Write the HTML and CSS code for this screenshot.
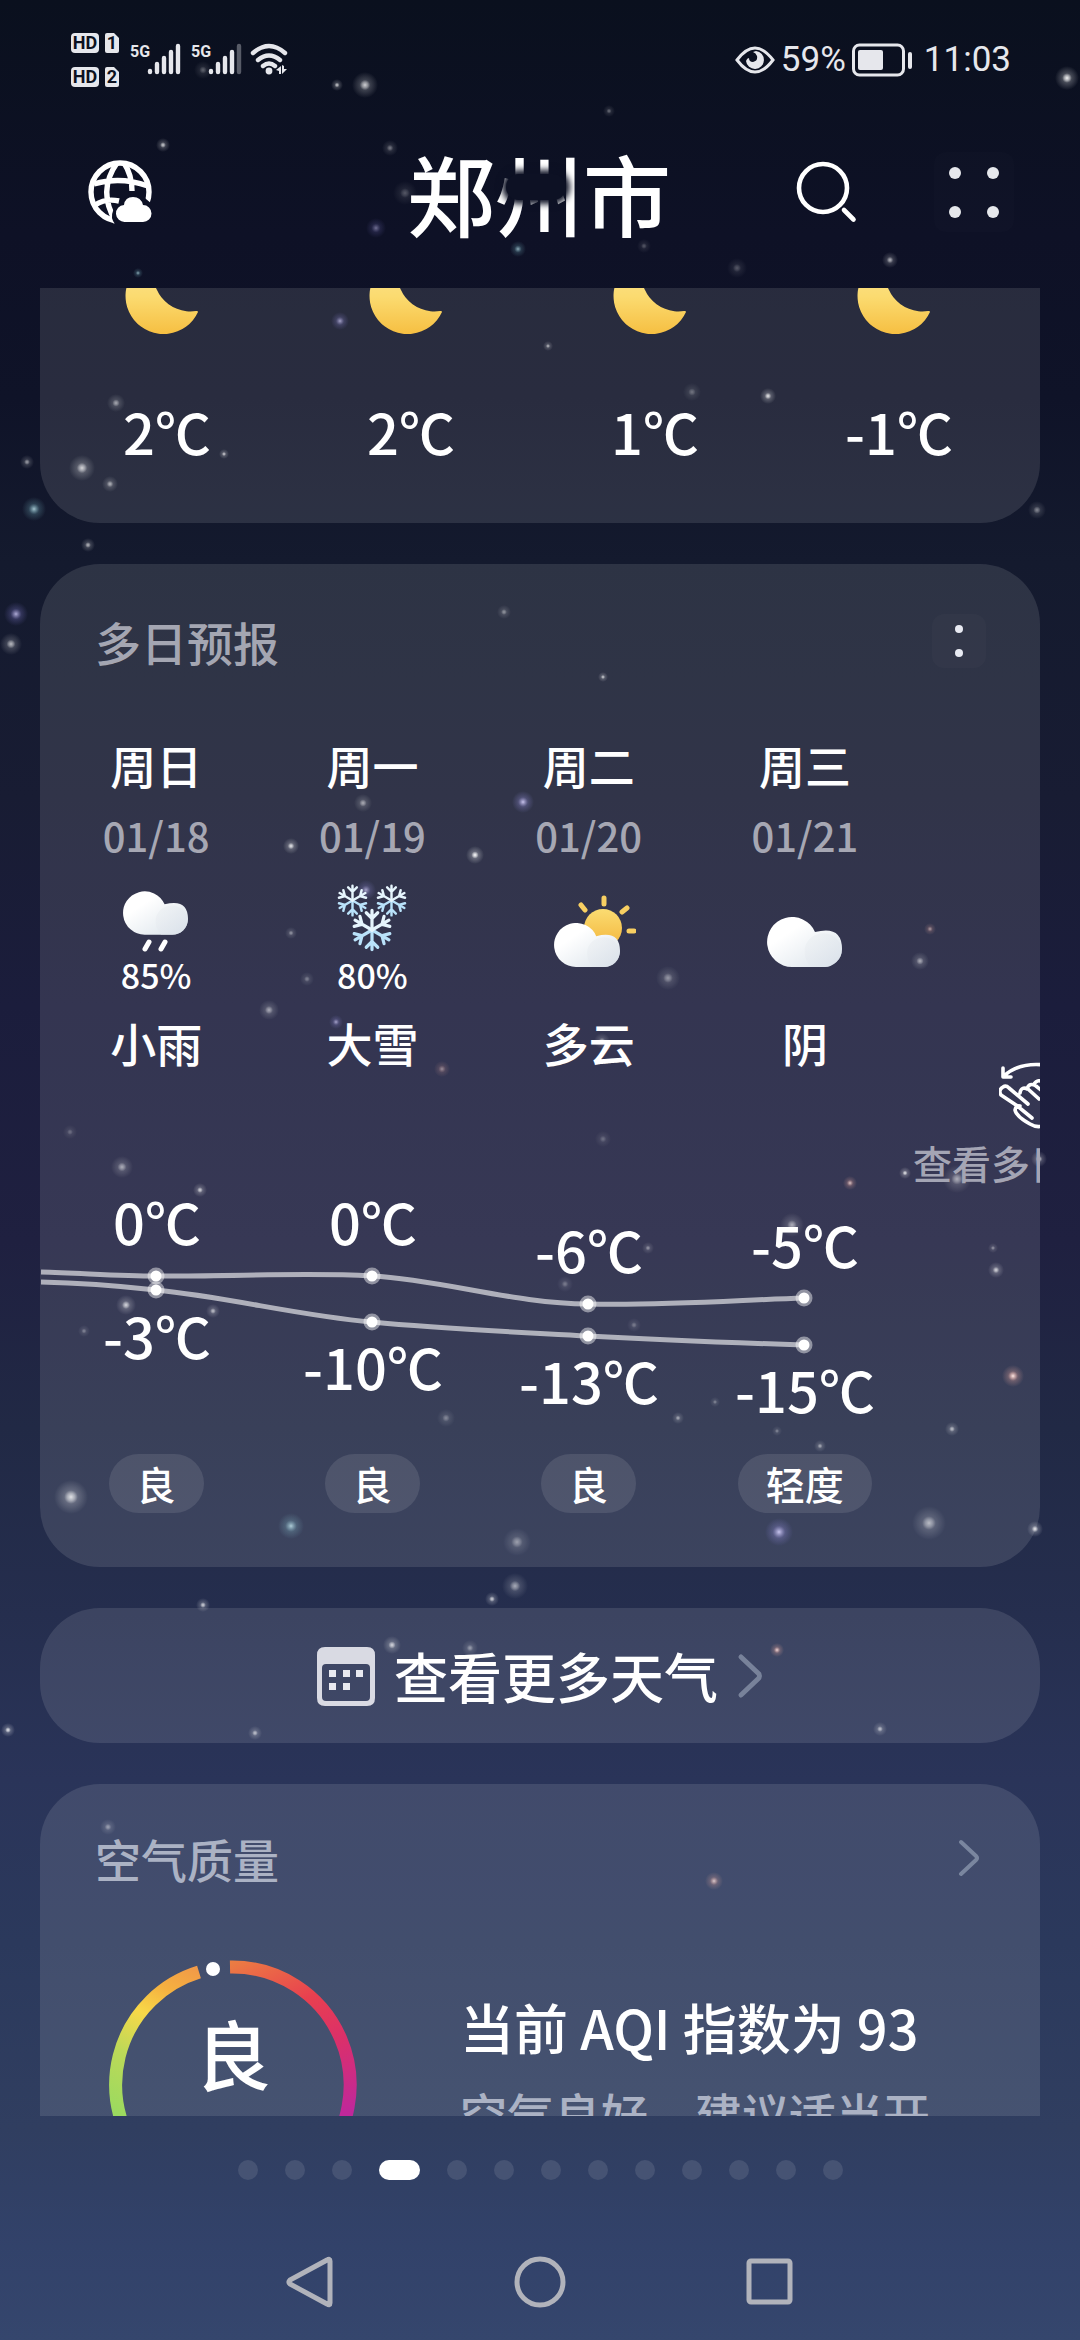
FILE: index.html
```
<!DOCTYPE html>
<html lang="zh-CN">
<head>
<meta charset="utf-8">
<meta name="viewport" content="width=device-width, initial-scale=1">
<title>郑州市</title>
<link rel="stylesheet" href="styles.css">
</head>
<body>
<svg class="sky" id="sky" viewBox="0 0 1080 2340" preserveAspectRatio="xMidYMid slice" aria-hidden="true">
  <defs>
    <radialGradient id="white"><stop offset="0" stop-color="#fff"/><stop offset=".22" stop-color="#fff" stop-opacity=".65"/><stop offset=".4" stop-color="#fff" stop-opacity=".25"/><stop offset="1" stop-color="#fff" stop-opacity="0"/></radialGradient>
    <radialGradient id="violet"><stop offset="0" stop-color="#d5d0ff"/><stop offset=".25" stop-color="#b5aef0" stop-opacity=".6"/><stop offset=".45" stop-color="#8f88e0" stop-opacity=".3"/><stop offset="1" stop-color="#8078d8" stop-opacity="0"/></radialGradient>
    <radialGradient id="teal"><stop offset="0" stop-color="#c8eef5"/><stop offset=".25" stop-color="#a0d5e0" stop-opacity=".6"/><stop offset=".45" stop-color="#80c0cc" stop-opacity=".28"/><stop offset="1" stop-color="#80c0cc" stop-opacity="0"/></radialGradient>
    <radialGradient id="pink"><stop offset="0" stop-color="#ffe8e4"/><stop offset=".25" stop-color="#f0b8b0" stop-opacity=".65"/><stop offset=".45" stop-color="#e09a90" stop-opacity=".3"/><stop offset="1" stop-color="#e09a90" stop-opacity="0"/></radialGradient>
  </defs>
</svg>

<header class="top">
  <div class="status">
    <svg class="status-net" viewBox="0 0 220 60" width="220" height="60" role="img" aria-label="HD 5G Wi-Fi">
      <g fill="#e6e7ec">
        <rect x="0" y="3" width="28" height="20" rx="4"/>
        <rect x="0" y="37" width="28" height="20" rx="4"/>
        <path d="M36 3h7l5 5v13a2 2 0 0 1-2 2h-10a2 2 0 0 1-2-2v-16a2 2 0 0 1 2-2z"/>
        <path d="M36 37h7l5 5v13a2 2 0 0 1-2 2h-10a2 2 0 0 1-2-2v-16a2 2 0 0 1 2-2z"/>
      </g>
      <g class="badge-text">
        <text x="14" y="19">HD</text><text x="14" y="53">HD</text>
        <text x="41" y="19">1</text><text x="41" y="53">2</text>
      </g>
      <g class="net-text"><text x="59" y="27">5G</text><text x="120" y="27">5G</text></g>
      <g stroke="#e6e7ec" stroke-width="4.4" stroke-linecap="round">
        <path d="M79 41v1M86 34v8M93 28v14M100 22v20M107 16v26"/>
        <path d="M140 41v1M147 34v8M154 28v14M161 22v20"/>
        <path d="M168 16v26" opacity=".35"/>
      </g>
      <g fill="none" stroke="#e6e7ec" stroke-width="4.4" stroke-linecap="round">
        <path d="M182 23q16-14 32 0M187 30q11-9 22 0M192 36q6-5 12 0"/>
      </g>
      <circle cx="198" cy="41" r="3.4" fill="#e6e7ec"/>
      <path d="M205 40l5-4v8h-2v-3zM211 35l0 9 5-5h-3v-3z" fill="#e6e7ec"/>
    </svg>
    <div class="status-right">
      <svg viewBox="0 0 40 28" width="40" height="28" aria-hidden="true">
        <path d="M2 14Q20-10 38 14Q20 38 2 14Z" fill="none" stroke="#e6e7ec" stroke-width="3"/>
        <path d="M21 5a9 9 0 1 1-10 10q1-3 3-3q0 4 4 4q5-1 4-6q-1-3-4-4z" fill="#e6e7ec"/>
      </svg>
      <span class="pct">59%</span>
      <svg viewBox="0 0 60 34" width="60" height="34" aria-hidden="true">
        <rect x="1.5" y="2" width="50" height="30" rx="6" fill="none" stroke="#e6e7ec" stroke-width="3"/>
        <rect x="6" y="7" width="25" height="20" rx="2" fill="#e6e7ec"/>
        <rect x="56" y="9" width="4" height="17" rx="2" fill="#e6e7ec"/>
      </svg>
      <time>11:03</time>
    </div>
  </div>
  <div class="bar">
    <button class="icon-btn city-list" aria-label="城市管理">
      <svg viewBox="0 0 64 64" width="64" height="64">
        <mask id="cut"><rect width="64" height="64" fill="#fff"/><path d="M27 64q-5-6-2-13q2-5 6-6l1 0q3-12 14-12q9 0 12 6l6 5v20z" fill="#000"/></mask>
        <g mask="url(#cut)" fill="none" stroke="#fff" stroke-width="5.4">
          <circle cx="32" cy="32" r="29"/>
          <path d="M29 3q-20 28-1 59M36 3q8 12 8 28M6 24q26-8 54 2M7 45q11-7 24-4"/>
        </g>
        <path d="M37 62a8.500 8.500 0 0 1-1-17q1-8 9-8t10 8a8.500 8.500 0 0 1 0 17z" fill="#fff"/>
      </svg>
    </button>
    <h1>郑州市</h1>
    <div class="tools">
      <button class="icon-btn" aria-label="搜索">
        <svg viewBox="0 0 62 62" width="62" height="62" fill="none" stroke="#fff" stroke-width="4.600" stroke-linecap="round"><circle cx="27" cy="27" r="24"/><path d="M48 49l9.500 9.500"/></svg>
      </button>
      <button class="icon-btn more" aria-label="更多">
        <svg viewBox="0 0 80 80" width="80" height="80" fill="#e6e8ec"><circle cx="21" cy="21" r="6"/><circle cx="59" cy="21" r="6"/><circle cx="21" cy="60" r="6"/><circle cx="59" cy="60" r="6"/></svg>
      </button>
    </div>
    <span class="camera"></span>
  </div>
</header>

<main>
  <svg class="defs" width="0" height="0" aria-hidden="true">
    <defs>
      <linearGradient id="moonfill" x1="0" y1="0" x2="0" y2="1"><stop offset="0" stop-color="#fbe394"/><stop offset=".5" stop-color="#fbdb70"/><stop offset="1" stop-color="#f6bf42"/></linearGradient>
      <linearGradient id="cloudfill" x1="0" y1="0" x2="1" y2="1"><stop offset=".3" stop-color="#fff"/><stop offset="1" stop-color="#d8e1e9"/></linearGradient>
      <linearGradient id="puff" x1="0" y1="0" x2="1" y2="1"><stop offset="0" stop-color="#eef1f3"/><stop offset="1" stop-color="#d9e0ea"/></linearGradient>
      <linearGradient id="sun" x1="0" y1="0" x2="0" y2="1"><stop offset="0" stop-color="#fbdc72"/><stop offset="1" stop-color="#f3b63c"/></linearGradient>
      <symbol id="moon" viewBox="0 0 76 76"><path d="M30 1A38 38 0 1 0 73 54Q73 52.500 71 53A37 37 0 0 1 31 3Q31 1 30 1Z" fill="url(#moonfill)"/></symbol>
      <symbol id="cloud" viewBox="0 0 75 50">
        <path d="M25 50A25 25 0 1 1 48 15Q75 8 75 32A18 18 0 0 1 56 50Z" fill="url(#cloudfill)"/>
        <path d="M38 30A19 19 0 0 1 75 32A18 18 0 0 1 56 50H44Q36 42 38 30Z" fill="url(#puff)" opacity=".6"/>
      </symbol>
      <symbol id="flake" viewBox="-20 -20 40 40" overflow="visible">
        <g fill="none" stroke-width="2.800" stroke-linecap="round">
          <g stroke="#b9e2fa"><path d="M0 0V-17M-5-15L0-10L5-15" transform="rotate(180)"/><path d="M0 0V-17M-5-15L0-10L5-15" transform="rotate(120)"/><path d="M0 0V-17M-5-15L0-10L5-15" transform="rotate(240)"/></g>
          <g stroke="#e6f5fd"><path d="M0 0V-17M-5-15L0-10L5-15"/><path d="M0 0V-17M-5-15L0-10L5-15" transform="rotate(60)"/><path d="M0 0V-17M-5-15L0-10L5-15" transform="rotate(300)"/></g>
        </g>
      </symbol>
    </defs>
  </svg>

  <section class="card hourly">
    <div class="hour"><svg width="76" height="76"><use href="#moon"/></svg><span>2℃</span></div>
    <div class="hour"><svg width="76" height="76"><use href="#moon"/></svg><span>2℃</span></div>
    <div class="hour"><svg width="76" height="76"><use href="#moon"/></svg><span>1℃</span></div>
    <div class="hour"><svg width="76" height="76"><use href="#moon"/></svg><span>-1℃</span></div>
  </section>

  <section class="card daily">
    <div class="card-head">
      <h2>多日预报</h2>
      <button class="icon-btn menu" aria-label="菜单"><svg viewBox="0 0 54 54" width="54" height="54" fill="#e8eaf2"><circle cx="27" cy="15" r="4"/><circle cx="27" cy="39" r="4"/></svg></button>
    </div>
    <div class="days">
      <div class="day">
        <b>周日</b><span class="date">01/18</span>
        <div class="sky-icon">
          <svg width="80" height="76" viewBox="0 0 80 76"><use href="#cloud" x="7" y="12" width="65" height="44"/><path d="M33 63l-4 7M49 63l-4 7" stroke="#fff" stroke-width="5" stroke-linecap="round"/></svg>
          <small>85%</small>
        </div>
        <b>小雨</b>
      </div>
      <div class="day">
        <b>周一</b><span class="date">01/19</span>
        <div class="sky-icon">
          <svg width="80" height="76" viewBox="0 0 80 76"><use href="#flake" x="3" y="4" width="35" height="35"/><use href="#flake" x="42" y="4" width="35" height="35"/><use href="#flake" x="17" y="28" width="46" height="46"/></svg>
          <small>80%</small>
        </div>
        <b>大雪</b>
      </div>
      <div class="day">
        <b>周二</b><span class="date">01/20</span>
        <div class="sky-icon">
          <svg width="94" height="116" viewBox="-7 -2 94 116"><circle cx="54" cy="47" r="19" fill="url(#sun)"/><path d="M55 17v6M32 24l4 5M78 27l-5 4M80 50h5" stroke="#f8cf62" stroke-width="5" stroke-linecap="round" fill="none"/><use href="#cloud" x="5" y="42" width="66" height="44"/></svg>
        </div>
        <b>多云</b>
      </div>
      <div class="day">
        <b>周三</b><span class="date">01/21</span>
        <div class="sky-icon">
          <svg width="80" height="116" viewBox="0 -2 80 116"><use href="#cloud" x="2" y="36" width="75" height="50"/></svg>
        </div>
        <b>阴</b>
      </div>
      <div class="hint">
        <svg width="70" height="70" viewBox="0 0 70 70" fill="none" stroke="#fff" stroke-width="3.600" stroke-linecap="round" stroke-linejoin="round">
          <path d="M5 14Q20 0 46 3M4 6v9h8"/>
          <path d="M33 56L17 43L2 33q-3-5 2-8q3-2 6 1L29 42M21 31q1-7 8-4l11 10M28 27q2-7 9-3l10 8M35 22q4-6 10-1l12 14q6 16-6 25q-10 8-20 2Q17 54 16 48q1-5 5-4"/>
        </svg>
        <span>查看多日</span>
      </div>
    </div>
    <svg class="chart" viewBox="0 0 1000 264" role="img" aria-label="最高与最低气温">
      <g class="line">
        <path d="M1 82C40 83 80 86 116 86C190 87 260 82 332 86C404 90 476 114 548 114C620 116 700 110 764 108"/>
        <path d="M1 92C50 93 80 96 116 100C188 107 260 126 332 132C404 139 476 142 548 146C620 150 700 153 764 155"/>
      </g>
      <g class="halo"><circle cx="116" cy="86" r="8.500"/><circle cx="332" cy="86" r="8.500"/><circle cx="548" cy="114" r="8.500"/><circle cx="764" cy="108" r="8.500"/><circle cx="116" cy="100" r="8.500"/><circle cx="332" cy="132" r="8.500"/><circle cx="548" cy="146" r="8.500"/><circle cx="764" cy="155" r="8.500"/></g>
      <g class="pt"><circle cx="116" cy="86" r="5.500"/><circle cx="332" cy="86" r="5.500"/><circle cx="548" cy="114" r="5.500"/><circle cx="764" cy="108" r="5.500"/><circle cx="116" cy="100" r="5.500"/><circle cx="332" cy="132" r="5.500"/><circle cx="548" cy="146" r="5.500"/><circle cx="764" cy="155" r="5.500"/></g>
      <g class="deg">
        <text x="117" y="55">0℃</text><text x="333" y="55">0℃</text><text x="549" y="83">-6℃</text><text x="765" y="78">-5℃</text>
        <text x="117" y="169">-3℃</text><text x="333" y="200">-10℃</text><text x="549" y="214">-13℃</text><text x="765" y="223">-15℃</text>
      </g>
    </svg>
    <div class="pills"><span>良</span><span>良</span><span>良</span><span>轻度</span></div>
  </section>

  <button class="card more-weather">
    <svg viewBox="0 0 58 60" width="58" height="60">
      <path fill-rule="evenodd" fill="#d9dae3" d="M8 1h42q8 0 8 8v43q0 8-8 8h-42q-8 0-8-8v-43q0-8 8-8zM9 18q-4 0-4 4v29q0 4 4 4h40q4 0 4-4v-29q0-4-4-4z"/>
      <path fill="#e8e9f0" d="M12 24h7v7h-7zM26 24h7v7h-7zM39 24h7v7h-7zM12 37h7v7h-7zM26 37h7v7h-7z"/>
    </svg>
    <span>查看更多天气</span>
    <svg viewBox="0 0 26 46" width="26" height="46" fill="none" stroke="#78829a" stroke-width="5" stroke-linecap="round" stroke-linejoin="round"><path d="M4 4L22 21Q23 23 22 25L4 42"/></svg>
  </button>

  <section class="card air">
    <div class="card-head">
      <h2>空气质量</h2>
      <svg viewBox="0 0 22 38" width="22" height="38" fill="none" stroke="#7a869f" stroke-width="4" stroke-linecap="round" stroke-linejoin="round"><path d="M3 3L18 17Q20 19 18 21L3 35"/></svg>
    </div>
    <div class="air-body">
      <svg class="ring" width="250" height="250" viewBox="0 0 250 250" role="img" aria-label="良">
        <defs>
          <linearGradient id="warm" gradientUnits="userSpaceOnUse" x1="120" y1="0" x2="200" y2="170"><stop offset="0" stop-color="#ec8042"/><stop offset=".36" stop-color="#e8404f"/><stop offset=".62" stop-color="#dc3068"/><stop offset="1" stop-color="#c0289a"/></linearGradient>
          <linearGradient id="cool" gradientUnits="userSpaceOnUse" x1="90" y1="0" x2="10" y2="160"><stop offset="0" stop-color="#f0944a"/><stop offset=".22" stop-color="#f5b040"/><stop offset=".4" stop-color="#f8d848"/><stop offset=".65" stop-color="#bcd958"/><stop offset="1" stop-color="#98da60"/></linearGradient>
        </defs>
        <path d="M122 7A118 118 0 0 1 208 208" fill="none" stroke="url(#warm)" stroke-width="13"/>
        <path d="M91 12A118 118 0 0 0 42 208" fill="none" stroke="url(#cool)" stroke-width="13"/>
        <circle cx="105" cy="9" r="7" fill="#fff"/>
        <text x="125" y="125">良</text>
      </svg>
      <div class="air-text">
        <p class="aqi">当前 AQI 指数为 93</p>
        <p class="advice">空气良好，建议适当开</p>
      </div>
    </div>
  </section>
</main>

<footer>
  <div class="pager"><i></i><i></i><i></i><i class="on"></i><i></i><i></i><i></i><i></i><i></i><i></i><i></i><i></i><i></i></div>
  <nav>
    <button class="icon-btn" aria-label="返回"><svg viewBox="0 0 52 52" width="52" height="52"><path d="M46 5V47Q46 50 43 48L6 28Q4 26 6 24L43 4Q46 2 46 5Z"/></svg></button>
    <button class="icon-btn" aria-label="主页"><svg viewBox="0 0 52 52" width="52" height="52"><circle cx="26" cy="26" r="23"/></svg></button>
    <button class="icon-btn" aria-label="最近任务"><svg viewBox="0 0 52 52" width="52" height="52"><rect x="5" y="5" width="41" height="41" rx="2"/></svg></button>
  </nav>
</footer>
<script src="sky.js"></script>
</body>
</html>
```
FILE: sky.js
```
// Stars of the night sky: x, y, radius, opacity, tint
const stars = [
  [203,70,9,.35],[337,85,6,.8],[365,85,13,.8],[163,145,7,.8],[390,148,8,.45],[405,193,12,.3],[376,228,10,.5,'violet'],
  [518,249,8,.7,'teal'],[138,273,5,.7,'teal'],[609,111,6,.4],[1067,78,12,.95],[644,246,7,.3],[737,268,10,.3],[890,260,8,.7],
  [340,321,9,.7,'violet'],[116,403,9,.6],[27,462,7,.6],[82,468,13,.8],[110,484,8,.65],[224,454,5,.8],[34,509,12,.8,'teal'],
  [88,545,7,.7],[16,614,12,.8,'violet'],[11,644,11,.7],[504,612,7,.5],[548,346,5,.7],[692,392,9,.35],[768,396,8,.9],
  [1037,510,9,.5],[603,677,5,.8],[363,803,9,.6],[523,802,11,.9,'violet'],[291,846,8,.9],[475,855,9,1],[366,890,10,.7,'violet'],
  [291,933,6,.5],[307,979,7,.4],[269,1010,10,.6],[336,1022,7,.7,'violet'],[442,1069,8,.5,'pink'],[930,929,6,.6,'pink'],
  [920,961,9,.6],[668,978,12,.5],[602,1041,8,.6],[603,1139,8,.3],[850,1183,7,.8,'pink'],[905,1173,6,.9],[957,1179,14,.6],
  [1039,1159,8,.8],[122,1167,11,.6],[200,1190,7,.8],[126,1305,10,.8],[213,1311,7,.7],[84,1331,6,.4],[446,1418,9,.4],
  [71,1497,17,.85],[291,1526,13,.8,'teal'],[517,1542,14,.5],[515,1586,13,.6],[492,1599,7,.8],[792,1225,12,.6],[648,1248,6,.5],
  [565,1284,8,.35],[634,1325,7,.35],[993,1248,5,.5],[996,1270,8,.8],[1013,1376,11,1,'pink'],[678,1418,6,.6],[715,1402,5,.4],
  [777,1431,5,.4],[820,1446,6,.6],[952,1429,7,.7],[779,1532,14,.9,'violet'],[929,1523,17,.65],[1035,1529,8,.9],[70,1132,7,.3],
  [203,1605,7,.8],[392,1645,9,.8],[470,1648,8,.5],[8,1730,7,.9],[255,1733,7,.7],[108,1827,8,.5],[777,1650,7,.9,'pink'],
  [880,1729,7,.7],[714,1881,9,.8,'pink']
];
const sky = document.getElementById('sky');
for (const [x, y, r, o, tint] of stars) {
  const c = document.createElementNS('http://www.w3.org/2000/svg', 'circle');
  c.setAttribute('cx', x);
  c.setAttribute('cy', y);
  c.setAttribute('r', r);
  c.setAttribute('opacity', o);
  c.setAttribute('fill', `url(#${tint || 'white'})`);
  sky.append(c);
}
```
FILE: styles.css
```
* { box-sizing: border-box; margin: 0; padding: 0; }

body {
  display: flex;
  flex-direction: column;
  height: 100vh;
  overflow: hidden;
  position: relative;
  font-family: "Noto Sans CJK SC", sans-serif;
  font-weight: 500;
  color: #fff;
  background: linear-gradient(#0a101e 0, #0e1126 10%, #0f1328 17%, #141a2e 24%, #181c33 34%, #1b1d3c 43%, #1f2040 53%, #212945 61%, #252e4e 69%, #2a3459 76%, #2b395c 83%, #303e60 91%, #32426a 96%, #35466d 100%);
}

svg { display: block; flex: none; }
.defs { position: absolute; }
.sky { position: absolute; inset: 0; width: 100%; height: 100%; }
.top, main, footer { position: relative; }

.icon-btn { display: block; background: none; border: 0; color: inherit; }

/* status bar and title */
.status {
  display: flex;
  justify-content: space-between;
  align-items: center;
  height: 120px;
  padding: 0 69px 0 71px;
}
.status-right { display: flex; align-items: center; gap: 6px; }
.status-right, .badge-text, .net-text { font-family: Roboto, sans-serif; }
.status-right { font-size: 35px; font-weight: 400; line-height: 40px; color: #e6e7ec; }
.status-right time { padding-left: 6px; }
.badge-text { font-size: 18px; font-weight: 700; fill: #0c1120; text-anchor: middle; }
.net-text { font-size: 16px; font-weight: 700; fill: #e6e7ec; }

.bar {
  position: relative;
  display: grid;
  grid-template-columns: 1fr auto 1fr;
  align-items: center;
  height: 168px;
  padding: 0 66px 24px 88px;
}
.bar h1 { font-size: 88px; line-height: 120px; font-weight: 500; margin-right: 24px; }
.tools { display: flex; justify-content: flex-end; align-items: center; gap: 76px; }
.more { border-radius: 12px; background: rgba(255, 255, 255, .01); }
.camera {
  position: absolute;
  left: 50%;
  top: 54px;
  width: 60px;
  height: 26px;
  margin-left: -34px;
  border-radius: 13px;
  background: #0d1124;
  box-shadow: 0 0 6px 4px #0d1124;
}

/* scrolling content */
main {
  flex: 1;
  min-height: 0;
  overflow: hidden;
  padding: 0 40px;
}
.card { border-radius: 60px; background: rgba(255, 255, 255, .11); overflow: hidden; }

.hourly {
  display: grid;
  grid-template-columns: repeat(4, 1fr);
  height: 325px;
  margin-top: -90px;
  padding: 60px 19px 0 5px;
}
.hour { display: flex; flex-direction: column; align-items: center; gap: 57px; }
.hour svg { margin-right: 8px; }
.hour span { font-size: 56px; line-height: 80px; }

.daily { margin-top: 41px; padding: 47px 0 54px; }
.card-head { display: flex; justify-content: space-between; align-items: center; padding: 0 54px 0 55px; }
.card-head h2 { font-size: 46px; line-height: 60px; font-weight: 500; color: #a4a6b2; }
.menu { border-radius: 12px; background: rgba(255, 255, 255, .02); }

.days, .pills {
  display: grid;
  grid-template-columns: repeat(4, 21.8%) max-content;
  padding-left: 8px;
}
.days { height: 519px; padding-top: 66px; }
.day { display: flex; flex-direction: column; align-items: center; gap: 20px; }
.day b { font-size: 46px; line-height: 54px; font-weight: 500; }
.date { font-size: 40px; line-height: 48px; color: #a6a7b3; }
.sky-icon { display: flex; flex-direction: column; align-items: center; height: 116px; }
.sky-icon small { font-size: 34px; line-height: 40px; }
.hint { display: flex; flex-direction: column; align-items: flex-end; align-self: end; gap: 6px; padding-bottom: 4px; }
.hint span { font-size: 39px; line-height: 48px; color: #a4a5b4; }

.chart { width: 100%; height: auto; overflow: visible; }
.line { fill: none; stroke: rgba(255, 255, 255, .6); stroke-width: 5; }
.halo { fill: rgba(255, 255, 255, .45); }
.pt { fill: #fff; }
.deg { font-size: 56px; fill: #fff; text-anchor: middle; }

.pills { justify-items: center; }
.pills span {
  padding: 0 28px;
  border-radius: 30px;
  font-size: 39px;
  line-height: 59px;
  background: rgba(255, 255, 255, .1);
}

.more-weather {
  display: flex;
  justify-content: center;
  align-items: center;
  gap: 19px;
  width: 100%;
  height: 135px;
  margin-top: 41px;
  border: 0;
  font: 500 54px/80px "Noto Sans CJK SC", sans-serif;
  color: #fff;
}

.air { margin-top: 41px; padding: 44px 0 60px; }
.air .card-head { padding-right: 60px; }
.air h2 { color: #abb2c4; }
.air-body { display: flex; gap: 102px; padding: 72px 0 0 68px; }
.ring text { font-size: 76px; fill: #fff; text-anchor: middle; }
.air-text { padding-top: 31px; white-space: nowrap; }
.aqi { font-size: 54px; line-height: 72px; }
.advice { margin-top: 20px; font-size: 47px; line-height: 60px; color: #abb2c4; }

/* page dots and system buttons */
footer { height: 224px; padding-top: 44px; }
.pager { display: flex; justify-content: center; gap: 27px; }
.pager i { width: 20px; height: 20px; border-radius: 10px; background: #465373; }
.pager .on { width: 41px; background: #fff; }
nav { display: flex; justify-content: center; gap: 178px; padding-top: 76px; }
nav svg { fill: none; stroke: #b1b3bb; stroke-width: 5; }
```
